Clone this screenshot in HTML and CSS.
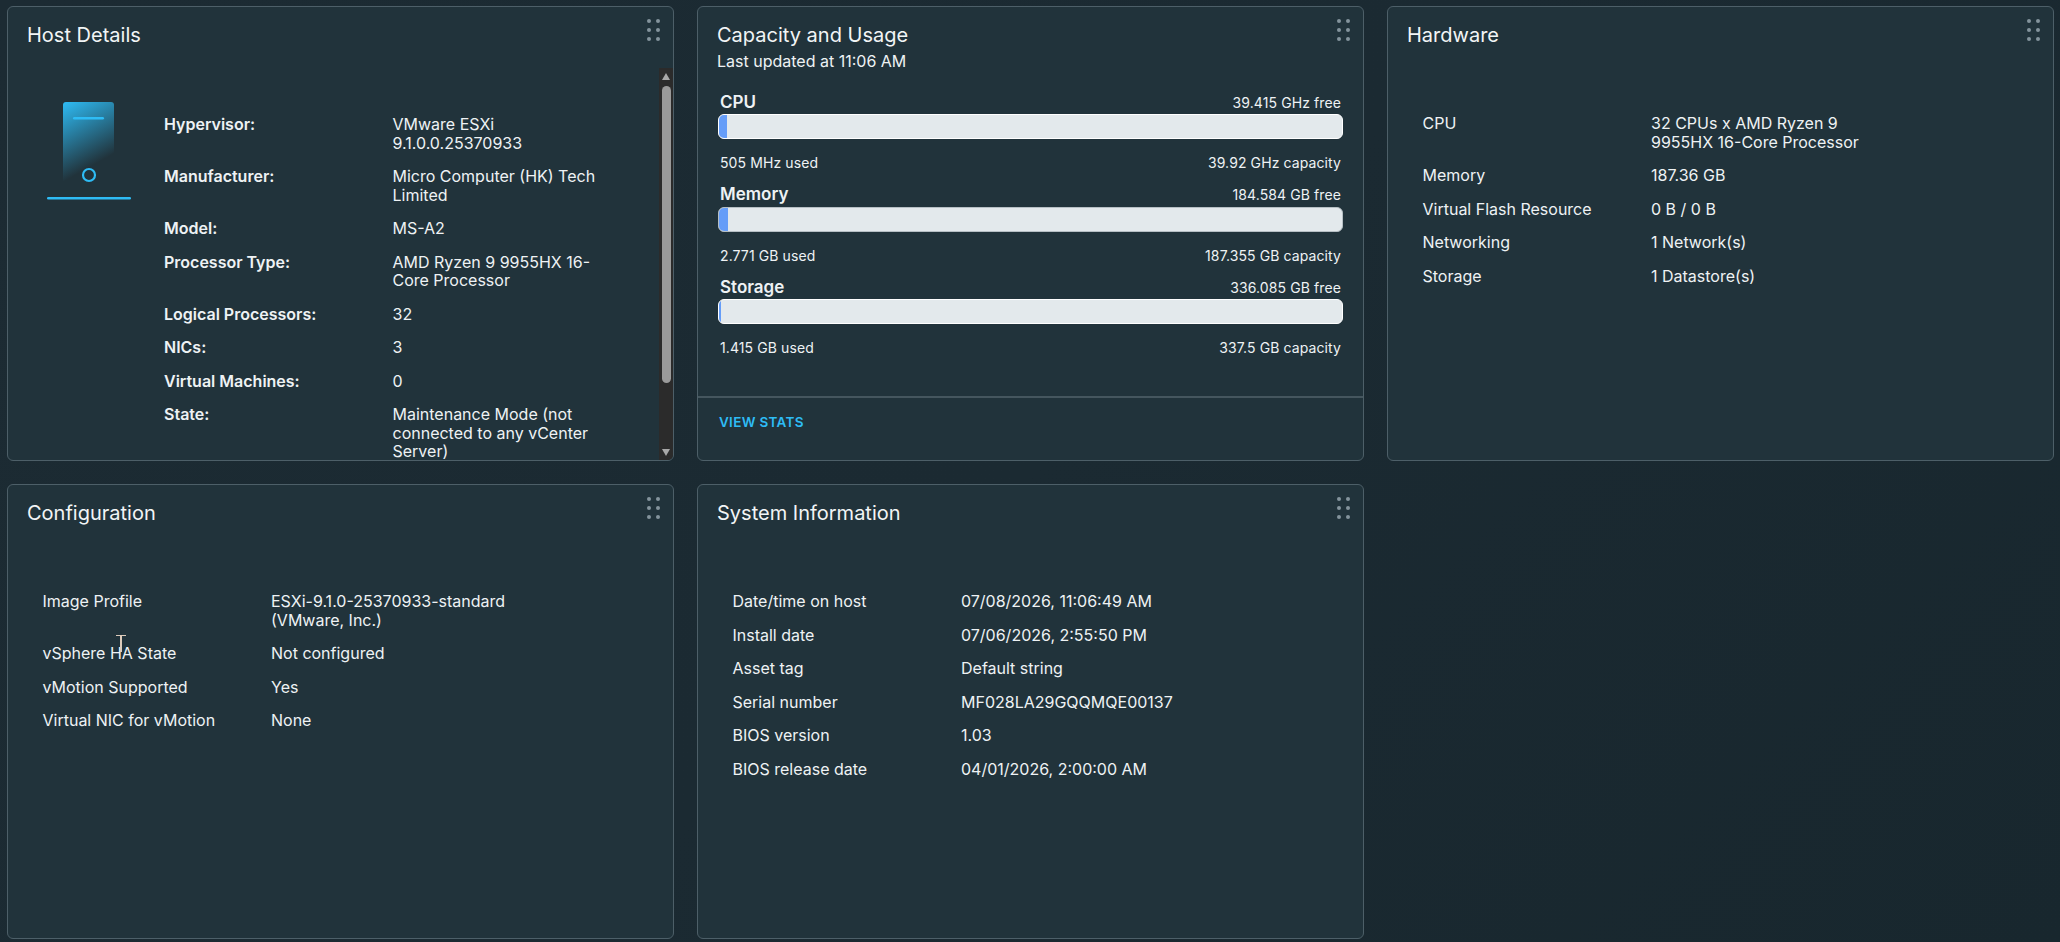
FILE: index.html
```html
<!DOCTYPE html>
<html lang="en">
<head>
  <meta charset="UTF-8">
  <title>Host Summary</title>
  <link rel="stylesheet" href="styles.css">
</head>
<body>
  <div class="grid">

    <div class="card">
      <h3 class="card-title">Host Details</h3>
      <div class="grip"><i></i><i></i><i></i><i></i><i></i><i></i></div>
      <div class="host-body">
        <div class="host-scroll">
          <svg class="host-icon" width="84" height="98" viewBox="0 0 84 98">
            <defs>
              <linearGradient id="tower" gradientUnits="userSpaceOnUse" x1="16" y1="0" x2="50" y2="61">
                <stop offset="0" stop-color="#2ebcf5"/>
                <stop offset="1" stop-color="#21333b"/>
              </linearGradient>
            </defs>
            <path d="M19 0h45a3 3 0 0 1 3 3v82H16V3a3 3 0 0 1 3-3z" fill="url(#tower)"/>
            <rect x="26" y="15" width="31" height="2.6" rx="1.3" fill="#2ebcf5"/>
            <circle cx="42" cy="73" r="6" fill="none" stroke="#2ebcf5" stroke-width="2.2"/>
            <rect x="0" y="95" width="84" height="2.6" rx="1.3" fill="#2ebcf5"/>
          </svg>
          <dl class="rows rows-bold">
            <dt>Hypervisor:</dt><dd>VMware ESXi<br>9.1.0.0.25370933</dd>
            <dt>Manufacturer:</dt><dd>Micro Computer (HK) Tech<br>Limited</dd>
            <dt>Model:</dt><dd>MS-A2</dd>
            <dt>Processor Type:</dt><dd>AMD Ryzen 9 9955HX 16-<br>Core Processor</dd>
            <dt>Logical Processors:</dt><dd>32</dd>
            <dt>NICs:</dt><dd>3</dd>
            <dt>Virtual Machines:</dt><dd>0</dd>
            <dt>State:</dt><dd>Maintenance Mode (not<br>connected to any vCenter<br>Server)</dd>
          </dl>
        </div>
        <div class="scrollbar">
          <span class="arrow-up"></span>
          <span class="thumb"></span>
          <span class="arrow-down"></span>
        </div>
      </div>
    </div>

    <div class="card">
      <h3 class="card-title">Capacity and Usage</h3>
      <div class="card-sub">Last updated at 11:06 AM</div>
      <div class="grip"><i></i><i></i><i></i><i></i><i></i><i></i></div>
      <div class="usage">
        <div class="meter">
          <div class="meter-top"><b>CPU</b><span>39.415 GHz free</span></div>
          <div class="bar"><div class="fill" style="width: 8px"></div></div>
          <div class="meter-bottom"><span>505 MHz used</span><span>39.92 GHz capacity</span></div>
        </div>
        <div class="meter">
          <div class="meter-top"><b>Memory</b><span>184.584 GB free</span></div>
          <div class="bar bar-grey"><div class="fill" style="width: 9px"></div></div>
          <div class="meter-bottom"><span>2.771 GB used</span><span>187.355 GB capacity</span></div>
        </div>
        <div class="meter">
          <div class="meter-top"><b>Storage</b><span>336.085 GB free</span></div>
          <div class="bar"><div class="fill" style="width: 2px"></div></div>
          <div class="meter-bottom"><span>1.415 GB used</span><span>337.5 GB capacity</span></div>
        </div>
      </div>
      <div class="card-footer"><a class="link">VIEW STATS</a></div>
    </div>

    <div class="card">
      <h3 class="card-title">Hardware</h3>
      <div class="grip"><i></i><i></i><i></i><i></i><i></i><i></i></div>
      <dl class="rows rows-plain">
        <dt>CPU</dt><dd>32 CPUs x AMD Ryzen 9<br>9955HX 16-Core Processor</dd>
        <dt>Memory</dt><dd>187.36 GB</dd>
        <dt>Virtual Flash Resource</dt><dd>0 B / 0 B</dd>
        <dt>Networking</dt><dd>1 Network(s)</dd>
        <dt>Storage</dt><dd>1 Datastore(s)</dd>
      </dl>
    </div>

    <div class="card">
      <h3 class="card-title">Configuration</h3>
      <div class="grip"><i></i><i></i><i></i><i></i><i></i><i></i></div>
      <dl class="rows rows-plain">
        <dt>Image Profile</dt><dd>ESXi-9.1.0-25370933-standard<br>(VMware, Inc.)</dd>
        <dt>vSphere HA State</dt><dd>Not configured</dd>
        <dt>vMotion Supported</dt><dd>Yes</dd>
        <dt>Virtual NIC for vMotion</dt><dd>None</dd>
      </dl>
      <div class="ibeam"></div>
    </div>

    <div class="card">
      <h3 class="card-title">System Information</h3>
      <div class="grip"><i></i><i></i><i></i><i></i><i></i><i></i></div>
      <dl class="rows rows-plain">
        <dt>Date/time on host</dt><dd>07/08/2026, 11:06:49 AM</dd>
        <dt>Install date</dt><dd>07/06/2026, 2:55:50 PM</dd>
        <dt>Asset tag</dt><dd>Default string</dd>
        <dt>Serial number</dt><dd>MF028LA29GQQMQE00137</dd>
        <dt>BIOS version</dt><dd>1.03</dd>
        <dt>BIOS release date</dt><dd>04/01/2026, 2:00:00 AM</dd>
      </dl>
    </div>

  </div>
</body>
</html>
```

FILE: styles.css
```css
html, body { height: 100%; }
body {
  margin: 0;
  background: linear-gradient(135deg, #1c2b33 0%, #1b2a32 50%, #18272e 100%);
  color: #eef2f4;
  font-family: Inter, "Noto Sans", sans-serif;
  font-size: 16px;
  line-height: 18.5px;
  overflow: hidden;
}
.grid {
  display: grid;
  grid-template-columns: repeat(3, 667px);
  grid-template-rows: 455px 455px;
  gap: 23px;
  padding: 6px 0 0 7px;
}
.card {
  position: relative;
  display: flex;
  flex-direction: column;
  box-sizing: border-box;
  background: #21333b;
  border: 1.5px solid #4d5f68;
  border-radius: 6px;
  overflow: hidden;
}
.card-title {
  margin: 0;
  padding: 16px 0 0 19px;
  font-size: 20px;
  line-height: 24px;
  font-weight: 400;
  color: #f2f5f6;
}
.card-sub {
  padding: 5px 0 0 19px;
}
.grip {
  position: absolute;
  top: 12px;
  right: 13px;
  display: grid;
  grid-template-columns: 4px 4px;
  grid-auto-rows: 4px;
  gap: 5px;
}
.grip i { background: #84949c; border-radius: 50%; }

/* key/value rows */
.rows {
  display: grid;
  grid-template-columns: 228.5px 1fr;
  align-content: start;
  row-gap: 15px;
  margin: 0;
  padding: 67px 0 0 34.5px;
}
.rows dt, .rows dd { margin: 0; }
.rows-bold { padding: 47px 0 0 0; flex: 1; }
.rows-bold dt { font-weight: 600; }

/* host details */
.host-body {
  display: flex;
  flex: 1;
  min-height: 0;
  margin-top: 21px;
}
.host-scroll {
  display: flex;
  flex: 1;
  overflow: hidden;
}
.host-icon {
  flex: none;
  margin: 34px 33px 0 39px;
  width: 84px;
  height: 98px;
}
.scrollbar {
  display: flex;
  flex-direction: column;
  align-items: center;
  flex: none;
  width: 14px;
  background: #2b2b2b;
}
.thumb {
  width: 9px;
  height: 297px;
  border-radius: 5px;
  background: #9a9a9a;
  margin-top: 6px;
}
.arrow-up, .arrow-down {
  width: 0;
  height: 0;
  border-left: 4px solid transparent;
  border-right: 4px solid transparent;
}
.arrow-up { border-bottom: 7px solid #a8a8a8; margin-top: 5px; }
.arrow-down { border-top: 7px solid #a8a8a8; margin-top: auto; margin-bottom: 4px; }

/* capacity */
.usage {
  flex: 1;
  padding: 22px 20px 0 20px;
}
.meter { height: 92.5px; }
.meter-top, .meter-bottom {
  display: flex;
  justify-content: space-between;
  align-items: baseline;
  padding: 0 2px;
  font-size: 14px;
  letter-spacing: 0.1px;
}
.meter-top b { font-size: 17px; font-weight: 600; letter-spacing: 0; }
.bar {
  height: 25px;
  margin-top: 2px;
  box-sizing: border-box;
  background: #e3e9ec;
  border: 1px solid #fff;
  border-radius: 6px;
  overflow: hidden;
}
.bar-grey { border-color: #b6bfc4; }
.fill { height: 100%; background: #659df8; }
.meter-bottom { margin-top: 15px; }
.card-footer {
  height: 64px;
  box-sizing: border-box;
  border-top: 2px solid #45565e;
  padding: 14px 0 0 21px;
}
.link {
  font-size: 13.5px;
  font-weight: 600;
  color: #2ebcf5;
  letter-spacing: 0.3px;
}

/* mouse pointer caught in the screenshot */
.ibeam {
  position: absolute;
  left: 111.5px;
  top: 149.5px;
  width: 2px;
  height: 17px;
  background: #dccbbb;
}
.ibeam::before {
  content: "";
  position: absolute;
  left: -4px;
  top: 0;
  width: 10px;
  height: 1.5px;
  background: #dccbbb;
}
```
